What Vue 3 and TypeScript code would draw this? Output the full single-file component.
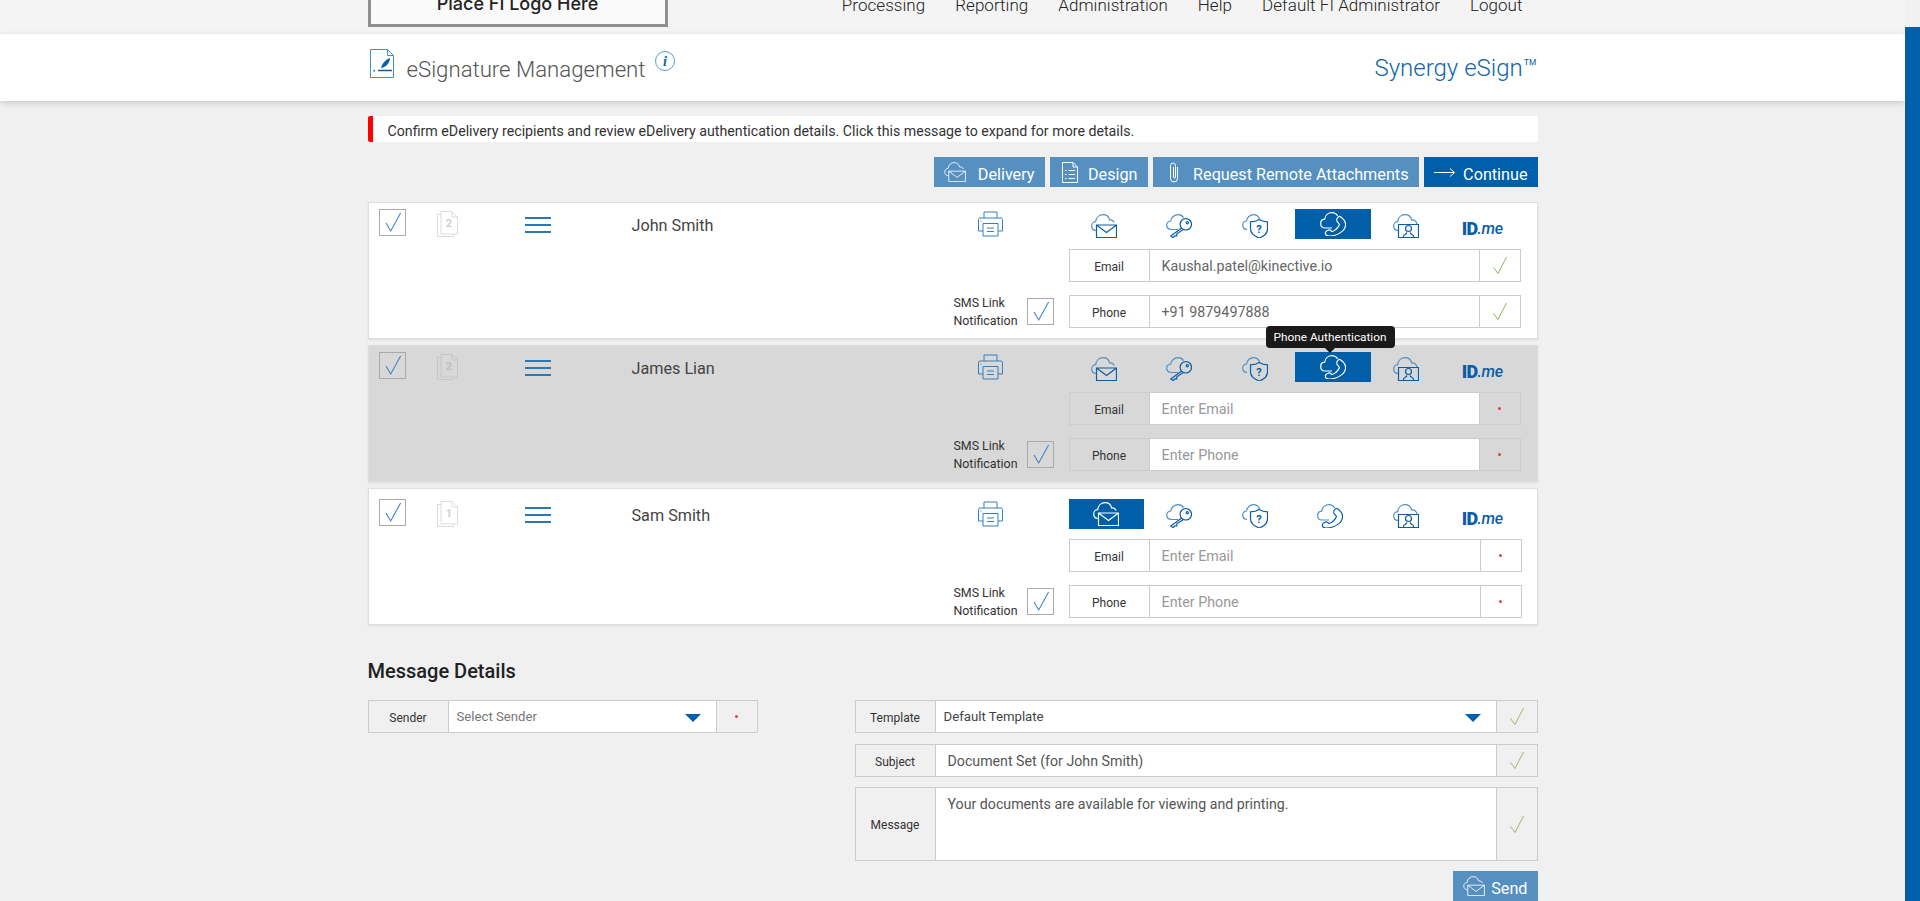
<template>
  <div class="shell">
    <svg class="sprites" xmlns="http://www.w3.org/2000/svg">
      <symbol id="i-email" viewBox="0 0 26 24">
        <path class="cloud" d="M5 16.500C2.200 16.300.7 14.200.7 12 .7 9.500 2.700 7.700 4.700 7.700 5.200 3.500 8.200.7 12 .7c3.500 0 6 2.300 6.600 5.300 1.900-.5 3.700.5 4.500 2.500" />
        <path d="M5.500 11h20v12.500h-20zM5.500 11l10 7.500 10-7.500" />
      </symbol>
      <symbol id="i-key" viewBox="0 0 26 24">
        <path class="cloud" d="M5.500 15.500C2.500 15.300.7 13.300.7 11 .7 8.700 2.700 7 4.700 7 5.200 3.300 8.500.7 12 .7c2.500 0 4.500 1.200 5.500 3M5.500 15.500h6.500" />
        <circle cx="19.800" cy="10.300" r="5.700" />
        <circle cx="21.300" cy="8.800" r="1.100" />
        <path d="M15.700 14 4.800 22l2.400 1.700 1.600-1.900h2v-2l6.200-4" />
      </symbol>
      <symbol id="i-shield" viewBox="0 0 26 24">
        <path class="cloud" d="M5 15.500C2.500 15.300.7 13.300.7 11c0-2.300 1.800-4 3.800-4C5 3.500 8 .7 11.500.7c3 0 5 1.500 6 4.300" />
        <path d="M8.500 7.800c3.500 0 6.300-.7 8.800-2.300 2.500 1.600 5.200 2.300 8.200 2.300v7c0 4.300-4 7.700-8.200 9.200-4.300-1.500-8.800-4.900-8.800-9.200z" />
        <text x="17" y="19" class="glyph">?</text>
      </symbol>
      <symbol id="i-phone" viewBox="0 0 26 24">
        <path class="cloud" d="M5 16C2.200 16 .7 14 .7 11.500.7 9 2.500 7.300 4.700 7.200 5.200 3.200 8.300.7 12 .7c2.500 0 4.500 1.300 5.700 3.300M5 16h7" />
        <path d="M20 4.500c4 2.500 6 5.500 5.500 9C25 18.500 18 24 9 24c-2.500 0-4-1.500-3.500-3.500.5-1.500 3-3 4.500-2.500l2 1.500c2.500-.5 6.500-4 7.500-7l-2-2.500c-1-1-1-3 0-4 1-1.500 1.500-2 2.500-1.500z" />
      </symbol>
      <symbol id="i-person" viewBox="0 0 26 24">
        <path class="cloud" d="M5 16.500C2.200 16.300.7 14.200.7 12 .7 9.500 2.700 7.700 4.700 7.700 5.200 3.500 8.200.7 12 .7c3.500 0 6 2.300 6.600 5.300 2.400-.5 4.900 1 5.400 4" />
        <path d="M5.500 10.500h20v13h-20z" />
        <circle cx="15.500" cy="14.500" r="3" />
        <path d="M10.500 23.500V22c0-1.500 3-1.500 3.500-3.500M20.500 23.500V22c0-1.500-3-1.500-3.500-3.500" />
      </symbol>
      <symbol id="i-printer" viewBox="0 0 27 26">
        <path d="M7 7V1h13v6M6 20H1.500V8.500A1.500 1.500 0 0 1 3 7h21a1.500 1.500 0 0 1 1.500 1.500V20H21" />
        <path d="M6 12.500h15V25H6zM10 17h7M10 20.500h7M3.500 10h1" />
      </symbol>
      <symbol id="i-design" viewBox="0 0 16 21">
        <path d="M.5.500h10.500l4.500 4.500v15.500H.5zM11 .5V5h4.500" />
        <path d="M3 8.500h1.500M6.500 8.500h6.500M3 12.500h1.500M6.500 12.500h6.500M3 16.500h1.500M6.500 16.500h6.500" />
      </symbol>
      <symbol id="i-clip" viewBox="0 0 10 21">
        <path d="M8.500 5v11.500a3.500 3.500 0 0 1-7 0V3.500a2.500 2.500 0 0 1 5 0V15a1 1 0 0 1-2 0V5" />
      </symbol>
    </svg>

    <main class="main">
      <div class="topbar">
        <div class="wrap topbar-inner">
          <div class="logo-box">Place FI Logo Here</div>
          <nav class="nav">
            <a v-for="item in navItems" :key="item">{{ item }}</a>
          </nav>
        </div>
      </div>

      <header class="band">
        <div class="wrap band-inner">
          <svg class="title-icon" viewBox="0 0 24 29" width="24" height="29">
            <path d="M.5.500h17l6 6v22H.5zM17.500.5v6h6" fill="none" stroke="#3f8ec9" />
            <path d="M11 19c1-4 4-8 9-10 0 4-3 8-7 9.500l-2 .5z" fill="#0a5da6" />
            <path d="M8 21.500h14" stroke="#0a5da6" stroke-width="1.500" />
            <path d="M3.500 21h1.500v1.500H3.500z" fill="#0a5da6" />
          </svg>
          <h1 class="title">eSignature Management</h1>
          <svg class="info-icon" viewBox="0 0 20 20" width="20" height="20">
            <circle cx="10" cy="10" r="9.500" fill="none" stroke="#5a9bd0" />
            <text x="10" y="15" class="info-i">i</text>
          </svg>
          <div class="brand">Synergy eSign™</div>
        </div>
      </header>

      <div class="wrap">
        <div class="alert">Confirm eDelivery recipients and review eDelivery authentication details. Click this message to expand for more details.</div>

        <div class="actions">
          <button class="btn btn-delivery">
            <svg class="icon-white" width="22" height="20"><use href="#i-email" /></svg>
            <span>Delivery</span>
          </button>
          <button class="btn btn-design">
            <svg class="icon-white" width="16" height="21"><use href="#i-design" /></svg>
            <span>Design</span>
          </button>
          <button class="btn btn-clip">
            <svg class="icon-white" width="10" height="21"><use href="#i-clip" /></svg>
            <span>Request Remote Attachments</span>
          </button>
          <button class="btn btn-primary">
            <svg class="arrow" width="21" height="9" viewBox="0 0 21 9">
              <path d="M0 4.500h20M16 .5l4.500 4-4.500 4" fill="none" stroke="#fff" />
            </svg>
            <span>Continue</span>
          </button>
        </div>

        <section
          v-for="r in recipients"
          :key="r.name"
          class="card"
          :class="{ 'card-muted': r.muted, 'card-low': r.low }"
        >
          <div class="card-left">
            <div class="card-top">
              <span class="check-box">
                <svg width="25" height="25" viewBox="0 0 25 25"><path d="M6 13l4.700 8L20.600 3" /></svg>
              </span>
              <svg class="doc" width="21" height="26" viewBox="0 0 21 26">
                <path d="M4 3.500H.5v22h16V23" />
                <path d="M4 .5h11l5.500 5.500v17H4zM15 .5V6h5.500" />
                <text x="12" y="16" class="doc-num">{{ r.order }}</text>
              </svg>
              <svg class="menu" width="26" height="16" viewBox="0 0 26 16">
                <path d="M0 1h26M0 8h26M0 15h26" />
              </svg>
              <div class="name">{{ r.name }}</div>
              <svg class="line-icon printer" width="27" height="26"><use href="#i-printer" /></svg>
            </div>
            <div class="sms">
              <span class="sms-text">SMS Link<br />Notification</span>
              <span class="check-box">
                <svg width="25" height="25" viewBox="0 0 25 25"><path d="M6 13l4.700 8L20.600 3" /></svg>
              </span>
            </div>
          </div>

          <div class="card-auth">
            <div class="tiles">
              <div
                v-for="t in tiles"
                :key="t"
                class="tile"
                :class="{ active: r.active === t }"
              >
                <svg class="line-icon" width="26" height="24"><use :href="`#i-${t}`" /></svg>
              </div>
              <div class="tile idme"><b>ID</b><i>.me</i></div>
            </div>
            <div v-for="f in r.fields" :key="f.label" class="field">
              <div class="field-label">{{ f.label }}</div>
              <div class="field-value" :class="{ empty: !f.value }">{{ f.value || `Enter ${f.label}` }}</div>
              <div class="field-state">
                <svg v-if="f.value" class="ok" width="16" height="19" viewBox="0 0 16 19"><path d="M1.500 11.500l4.500 6L14.500 1" /></svg>
                <span v-else class="req" />
              </div>
            </div>
            <div v-if="r.tooltip" class="tooltip">{{ r.tooltip }}</div>
          </div>
        </section>

        <h2 class="section-title">Message Details</h2>

        <div class="message-grid">
          <div class="field form-field">
            <div class="field-label">Sender</div>
            <div class="field-value select muted-text">
              Select Sender
              <span class="caret" />
            </div>
            <div class="field-state"><span class="req" /></div>
          </div>

          <div class="form-col">
            <div class="field form-field">
              <div class="field-label">Template</div>
              <div class="field-value select">
                Default Template
                <span class="caret" />
              </div>
              <div class="field-state">
                <svg class="ok olive" width="16" height="19" viewBox="0 0 16 19"><path d="M1.500 11.500l4.500 6L14.500 1" /></svg>
              </div>
            </div>
            <div class="field form-field subject">
              <div class="field-label">Subject</div>
              <div class="field-value wide">Document Set (for John Smith)</div>
              <div class="field-state">
                <svg class="ok olive" width="16" height="19" viewBox="0 0 16 19"><path d="M1.500 11.500l4.500 6L14.500 1" /></svg>
              </div>
            </div>
            <div class="field form-field message">
              <div class="field-label">Message</div>
              <div class="field-value wide">Your documents are available for viewing and printing.</div>
              <div class="field-state">
                <svg class="ok olive" width="16" height="19" viewBox="0 0 16 19"><path d="M1.500 11.500l4.500 6L14.500 1" /></svg>
              </div>
            </div>
            <div class="send-row">
              <button class="btn btn-send">
                <svg class="icon-white" width="22" height="20"><use href="#i-email" /></svg>
                <span>Send</span>
              </button>
            </div>
          </div>
        </div>
      </div>
    </main>

    <div class="scrollbar"><div class="thumb" /></div>
  </div>
</template>

<script setup lang="ts">
interface Field {
  label: string
  value: string
}

interface Recipient {
  name: string
  order: number
  active: string
  muted?: boolean
  low?: boolean
  tooltip?: string
  fields: Field[]
}

const navItems = ['Processing', 'Reporting', 'Administration', 'Help', 'Default FI Administrator', 'Logout']

const tiles = ['email', 'key', 'shield', 'phone', 'person']

const recipients: Recipient[] = [
  {
    name: 'John Smith',
    order: 2,
    active: 'phone',
    fields: [
      { label: 'Email', value: 'Kaushal.patel@kinective.io' },
      { label: 'Phone', value: '+91 9879497888' }
    ]
  },
  {
    name: 'James Lian',
    order: 2,
    active: 'phone',
    muted: true,
    tooltip: 'Phone Authentication',
    fields: [
      { label: 'Email', value: '' },
      { label: 'Phone', value: '' }
    ]
  },
  {
    name: 'Sam Smith',
    order: 1,
    active: 'email',
    low: true,
    fields: [
      { label: 'Email', value: '' },
      { label: 'Phone', value: '' }
    ]
  }
]
</script>

<style>
html,
body {
  margin: 0;
  height: 100%;
  overflow: hidden;
}
</style>

<style scoped>
.shell {
  display: flex;
  height: 100vh;
  overflow: hidden;
  background: #f0f0f0;
  font-family: Roboto, "Liberation Sans", sans-serif;
  color: #333;
}

.sprites {
  display: none;
}

.cloud {
  stroke: var(--cloud, #4f90c4);
}

.glyph {
  font: 700 11px Roboto, sans-serif;
  text-anchor: middle;
  fill: currentColor;
  stroke: none;
}

.main {
  flex: 1;
  min-width: 0;
  overflow: hidden;
}

.wrap {
  width: 1170px;
  margin: 0 auto;
}

.scrollbar {
  width: 15px;
  flex: none;
  padding-top: 27px;
  box-sizing: border-box;
  background: #f1f1f1;
}

.thumb {
  height: 100%;
  background: #005fa8;
}

.topbar {
  height: 34px;
  background: #f4f4f4;
  overflow: hidden;
}

.topbar-inner {
  display: flex;
  justify-content: space-between;
  align-items: flex-start;
}

.logo-box {
  width: 300px;
  height: 40px;
  margin-top: -13px;
  box-sizing: border-box;
  border: 3px solid #8f8f8f;
  border-top: 0;
  background: #fafafa;
  font: 500 18px Inter, sans-serif;
  color: #222;
  text-align: center;
  line-height: 33px;
}

.nav {
  display: flex;
  gap: 30px;
  margin-top: -5px;
  padding-right: 15px;
  font-size: 17px;
  font-weight: 300;
  letter-spacing: 0.04px;
  line-height: 20px;
  color: #222;
}

.band {
  height: 67px;
  background: #fff;
  box-shadow: 0 2px 6px rgba(0, 0, 0, 0.16);
  position: relative;
}

.band-inner {
  display: flex;
  align-items: flex-start;
}

.title-icon {
  margin: 15px 13px 0 2px;
}

.title {
  margin: 21px 10px 0 0;
  font-size: 22.2px;
  font-weight: 300;
  line-height: 28px;
  color: #555;
}

.info-icon {
  margin-top: 17px;
}

.info-i {
  font: italic 700 14px "Liberation Serif", serif;
  text-anchor: middle;
  fill: #0a5da6;
}

.brand {
  margin: 20px 0 0 auto;
  font-size: 24px;
  font-weight: 300;
  line-height: 28px;
  color: #0f66a8;
}

.alert {
  height: 24px;
  margin-top: 15px;
  padding: 2px 0 0 15px;
  border-left: 5px solid #f00;
  border-radius: 2px;
  background: #fff;
  font-size: 14.2px;
  line-height: 26px;
  color: #333;
}

.actions {
  display: flex;
  justify-content: flex-end;
  gap: 5px;
  margin-top: 15px;
}

.btn {
  display: flex;
  align-items: center;
  justify-content: space-between;
  height: 30px;
  box-sizing: border-box;
  padding: 0 10px;
  border: 0;
  background: #5590c0;
  font: 400 16.2px Roboto, sans-serif;
  color: #fff;
  white-space: nowrap;
}

.btn span {
  margin-top: 4px;
}

.btn-delivery {
  width: 111px;
}

.btn-design {
  width: 98px;
  padding-left: 12px;
}

.btn-clip {
  width: 266px;
  padding-left: 16px;
}

.btn-primary {
  width: 114px;
  background: #005fa8;
}

.icon-white {
  --cloud: #fff;
  color: #fff;
  fill: none;
  stroke: currentColor;
  stroke-width: 1;
}

.card {
  display: flex;
  height: 137px;
  box-sizing: border-box;
  margin-top: 6px;
  padding: 6px 16px 0 10px;
  border: 1px solid #dedede;
  background: #fff;
  box-shadow: 0 1px 2px rgba(0, 0, 0, 0.08);
}

.actions + .card {
  margin-top: 15px;
}

.card-muted {
  background: #d8d8d8;
}

.card-low {
  padding-top: 10px;
}

.card-left {
  width: 690px;
  flex: none;
  display: flex;
  flex-direction: column;
  justify-content: space-between;
}

.card-top {
  display: grid;
  grid-template-columns: 58px 88px 106px 346px 92px;
  align-items: start;
}

.check-box {
  display: block;
  width: 27px;
  height: 27px;
  box-sizing: border-box;
  border: 1px solid #aaa;
}

.check-box svg {
  display: block;
  fill: none;
  stroke: #3f85c4;
  stroke-width: 1.1;
}

.doc {
  margin-top: 2px;
  fill: none;
  stroke: #dcdcdc;
}

.card-muted .doc {
  stroke: #c6c6c6;
}

.doc-num {
  font: 700 11px Roboto, sans-serif;
  text-anchor: middle;
  fill: #d0d0d0;
  stroke: none;
}

.card-muted .doc-num {
  fill: #c0c0c0;
}

.menu {
  margin-top: 8px;
  fill: none;
  stroke: #2a78b5;
  stroke-width: 2;
}

.name {
  padding: 1px 0 0 1px;
  font-size: 16.2px;
  line-height: 32px;
  color: #444;
}

.line-icon {
  display: block;
  color: #0a5da6;
  fill: none;
  stroke: currentColor;
  stroke-width: 1.2;
}

.printer {
  margin-top: 2px;
  color: #3580bd;
  stroke-width: 1;
}

.sms {
  display: flex;
  align-items: center;
  justify-content: flex-end;
  gap: 9px;
  height: 33px;
  margin-bottom: 10px;
  padding-right: 15px;
}

.card-low .sms {
  margin-bottom: 6px;
}

.sms-text {
  padding-top: 1px;
  font-size: 12.4px;
  line-height: 18px;
  color: #333;
}

.card-auth {
  position: relative;
  width: 453px;
  flex: none;
}

.tiles {
  display: grid;
  grid-template-columns: repeat(6, 1fr);
  height: 30px;
  margin-bottom: 10px;
}

.tile {
  display: flex;
  align-items: center;
  justify-content: center;
}

.tile:not(.active) .line-icon {
  margin: 4px 5px 0 0;
}

.tile.active {
  --cloud: #fff;
  background: #005fa8;
}

.tile.active .line-icon {
  color: #fff;
}

.idme {
  padding: 10px 3px 0 0;
  color: #0a5da6;
  font-size: 18px;
  line-height: 1;
  letter-spacing: -0.6px;
}

.idme b {
  font-weight: 900;
}

.idme i {
  font-size: 16px;
  font-weight: 500;
  letter-spacing: -0.3px;
}

.field {
  display: flex;
  height: 33px;
  margin: 0 1px 13px 0;
  box-sizing: border-box;
  border: 1px solid #ccc;
  font-size: 12px;
}

.card-low .field {
  margin-right: 0;
}

.field-label {
  width: 80px;
  flex: none;
  box-sizing: border-box;
  display: flex;
  align-items: center;
  justify-content: center;
  padding-top: 2px;
  border-right: 1px solid #ccc;
  color: #333;
}

.field-value {
  flex: 1;
  min-width: 0;
  display: flex;
  align-items: center;
  padding-left: 12px;
  background: #fff;
  font-size: 14.3px;
  color: #666;
}

.field-value.empty {
  color: #999;
}

.field-state {
  width: 41px;
  flex: none;
  box-sizing: border-box;
  display: flex;
  align-items: center;
  justify-content: center;
  border-left: 1px solid #ccc;
}

.ok {
  fill: none;
  stroke: #8db85a;
  stroke-width: 1;
}

.ok.olive {
  stroke: #a4b56a;
}

.req {
  width: 3px;
  height: 3px;
  border-radius: 50%;
  background: #e0404f;
}

.tooltip {
  position: absolute;
  left: 197px;
  top: -26px;
  width: 129px;
  height: 22px;
  border-radius: 4px;
  background: #1a1a1a;
  font-size: 11.8px;
  line-height: 22px;
  color: #fff;
  text-align: center;
}

.tooltip::after {
  content: "";
  position: absolute;
  left: 59px;
  top: 22px;
  border: 5px solid transparent;
  border-bottom: 0;
  border-top-color: #1a1a1a;
}

.section-title {
  margin: 34px 0 0;
  font-size: 20px;
  font-weight: 500;
  line-height: 24px;
  color: #222;
}

.message-grid {
  display: grid;
  grid-template-columns: 390px 683px;
  justify-content: space-between;
  align-items: start;
  margin-top: 17px;
}

.form-field {
  margin: 0 0 11px;
}

.form-field.subject {
  margin-bottom: 10px;
}

.form-field.message {
  height: 74px;
  margin-bottom: 10px;
}

.select {
  position: relative;
  padding-left: 8px;
  font-size: 13.2px;
}

.form-col .select {
  color: #444;
}

.muted-text {
  color: #777;
}

.caret {
  position: absolute;
  right: 15px;
  top: 13px;
  border: 8px solid transparent;
  border-bottom: 0;
  border-top-color: #005fa8;
}

.wide {
  font-size: 14.2px;
  color: #555;
}

.message .wide {
  align-items: flex-start;
  padding-top: 8px;
  line-height: 17px;
}

.send-row {
  display: flex;
  justify-content: flex-end;
}

.btn-send {
  width: 85px;
}
</style>
